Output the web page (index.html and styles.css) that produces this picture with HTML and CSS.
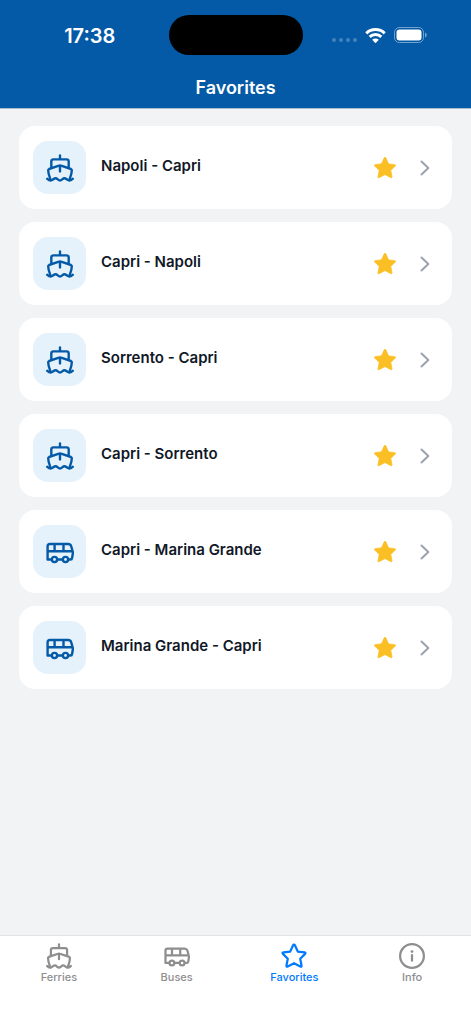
FILE: index.html
```html
<!DOCTYPE html>
<html lang="en">
<head>
<meta charset="utf-8">
<meta name="viewport" content="width=device-width, initial-scale=1">
<title>Favorites</title>
<link rel="stylesheet" href="styles.css">
</head>
<body>
<svg class="sprite" aria-hidden="true">
  <symbol id="ferry" viewBox="0 0 28 28">
    <path d="M14 1.400v4M5.300 13.500V7.600q0-2.200 2.200-2.200h13q2.200 0 2.200 2.200v5.900M14 12v5.400M4.300 25C3 21.800 2.200 19 2.200 16.200q0-.9.800-1.200L13 11.600q1-.4 2 0l10 3.400q.8.300.8 1.200c0 2.800-.8 5.600-2.100 8.800M1.200 24.800c1.300 1.500 3.300 2 4.900 1.200 1.200-.6 2.100-1.800 3.500-1.800 1.700 0 2.700 2.300 4.400 2.300s2.700-2.300 4.400-2.300c1.400 0 2.300 1.200 3.500 1.800 1.600.8 3.600.3 4.900-1.200"/>
  </symbol>
  <symbol id="bus" viewBox="0 0 28 28">
    <path d="M5.600 21.500H1.600V8.300q0-2.300 2.300-2.300h18.200q2.300 0 3 2l1.500 5.200q.4 1.200.2 2.500l-.7 4.300q-.2 1.500-1.700 1.500h-1.800M11.400 21.500h5.200M1.600 13.300h24.800M8.600 6v7.300M17.500 6v7.300"/>
    <circle cx="8.500" cy="21.500" r="2.600"/><circle cx="19.500" cy="21.500" r="2.600"/>
  </symbol>
  <symbol id="star" viewBox="0 0 28 28">
    <path d="M14 1.800q.7 0 1.100.9l3 6.500 7.300.9q1.700.3.500 1.600l-5.200 5.200 1.400 7.400q.2 1.700-1.300.9L14 21.700l-6.800 3.500q-1.500.8-1.300-.9l1.400-7.400-5.200-5.200q-1.200-1.300.5-1.600l7.300-.9 3-6.500q.4-.9 1.100-.9z"/>
  </symbol>
  <symbol id="chevron" viewBox="0 0 10 18"><path d="m1.500 2.500 6.800 6.500-6.800 6.500"/></symbol>
</svg>
<div class="app">
  <header class="header">
    <div class="status">
      <span class="time">17:38</span>
      <span class="island"></span>
      <span class="signals">
        <span class="dots"><i></i><i></i><i></i><i></i></span>
        <svg class="wifi" viewBox="0 0 21 15" aria-hidden="true"><path d="M1.300 5.300a13.200 13.200 0 0 1 18.400 0M4.700 8.800a8.400 8.400 0 0 1 11.600 0"/><path class="wifi-tip" d="M7.200 11.800a4.700 4.700 0 0 1 6.600 0l-2.800 2.900q-.5.4-1 0z"/></svg>
        <svg class="battery" viewBox="0 0 33 16" aria-hidden="true"><rect class="battery-shell" x=".5" y=".5" width="29" height="15" rx="4.800"/><rect x="2.500" y="2.500" width="25" height="11" rx="3"/><path class="battery-cap" d="M31 5.500q1.800.8 1.800 2.500T31 10.500z"/></svg>
      </span>
    </div>
    <h1 class="title">Favorites</h1>
  </header>
  <main class="list">
    <article class="card"><a class="route" href="#"><span class="tile"><svg class="icon"><use href="#ferry"/></svg></span><span class="name">Napoli - Capri</span></a><button class="fav" aria-label="Remove Napoli - Capri"><svg class="gold"><use href="#star"/></svg></button><svg class="chevron"><use href="#chevron"/></svg></article>
    <article class="card"><a class="route" href="#"><span class="tile"><svg class="icon"><use href="#ferry"/></svg></span><span class="name">Capri - Napoli</span></a><button class="fav" aria-label="Remove Capri - Napoli"><svg class="gold"><use href="#star"/></svg></button><svg class="chevron"><use href="#chevron"/></svg></article>
    <article class="card"><a class="route" href="#"><span class="tile"><svg class="icon"><use href="#ferry"/></svg></span><span class="name">Sorrento - Capri</span></a><button class="fav" aria-label="Remove Sorrento - Capri"><svg class="gold"><use href="#star"/></svg></button><svg class="chevron"><use href="#chevron"/></svg></article>
    <article class="card"><a class="route" href="#"><span class="tile"><svg class="icon"><use href="#ferry"/></svg></span><span class="name">Capri - Sorrento</span></a><button class="fav" aria-label="Remove Capri - Sorrento"><svg class="gold"><use href="#star"/></svg></button><svg class="chevron"><use href="#chevron"/></svg></article>
    <article class="card"><a class="route" href="#"><span class="tile"><svg class="icon"><use href="#bus"/></svg></span><span class="name">Capri - Marina Grande</span></a><button class="fav" aria-label="Remove Capri - Marina Grande"><svg class="gold"><use href="#star"/></svg></button><svg class="chevron"><use href="#chevron"/></svg></article>
    <article class="card"><a class="route" href="#"><span class="tile"><svg class="icon"><use href="#bus"/></svg></span><span class="name">Marina Grande - Capri</span></a><button class="fav" aria-label="Remove Marina Grande - Capri"><svg class="gold"><use href="#star"/></svg></button><svg class="chevron"><use href="#chevron"/></svg></article>
  </main>
  <nav class="tabs">
    <a class="tab" href="#"><svg class="tab-icon"><use href="#ferry"/></svg>Ferries</a>
    <a class="tab" href="#"><svg class="tab-icon"><use href="#bus"/></svg>Buses</a>
    <a class="tab active" href="#" aria-current="page"><svg class="tab-icon"><use href="#star"/></svg>Favorites</a>
    <a class="tab" href="#"><svg class="tab-icon" viewBox="0 0 28 28"><circle cx="14" cy="14" r="12.800"/><path d="M14 13v6"/><circle class="info-dot" cx="14" cy="9.200" r="1.500"/></svg>Info</a>
  </nav>
</div>
</body>
</html>
```

FILE: styles.css
```css
* { box-sizing: border-box; }
body { margin: 0; font-family: Inter, "Liberation Sans", sans-serif; background: #f2f3f5; color: #111827; }
svg { display: block; fill: none; stroke: currentColor; stroke-width: 2; stroke-linecap: round; stroke-linejoin: round; }
a { color: inherit; text-decoration: none; }
.sprite { position: absolute; width: 0; height: 0; }
.app { min-height: 100vh; display: flex; flex-direction: column; }
.header { background: #045aa6; color: #fff; border-bottom: 1px solid #a9bdd1; padding: 15px 0 8px; }
.status { display: grid; grid-template-columns: 1fr 134px 1fr; align-items: center; }
.time { justify-self: center; font-size: 20px; line-height: 24px; font-weight: 600; padding: 1px 0 0 11px; }
.island { height: 40px; border-radius: 20px; background: #000; }
.signals { display: flex; align-items: center; justify-self: end; gap: 8px; padding-right: 44px; }
.dots { display: flex; gap: 3px; padding-top: 10px; }
.dots i { width: 4px; height: 4px; border-radius: 2px; background: #4383bc; }
.wifi { width: 21px; height: 15px; stroke-width: 3; stroke-linecap: butt; }
.wifi-tip { fill: #fff; stroke: none; }
.battery { width: 33px; height: 16px; fill: #fff; stroke: none; }
.battery-shell { fill: none; stroke: #73a3cd; stroke-width: 1; }
.battery-cap { fill: #73a3cd; }
.title { margin: 21px 0 0; text-align: center; font-size: 18px; line-height: 24px; font-weight: 600; }
.list { flex: 1; display: flex; flex-direction: column; gap: 13px; padding: 17px 19px; }
.card { display: flex; align-items: center; background: #fff; border-radius: 16px; padding: 15px 22px 15px 14px; }
.route { flex: 1; display: flex; align-items: center; gap: 15px; }
.tile { display: grid; place-items: center; width: 53px; height: 53px; border-radius: 15px; background: #e5f1fb; color: #045aa6; }
.icon { width: 28px; height: 28px; stroke-width: 2.4; }
.name { font-size: 15px; line-height: 20px; font-weight: 600; padding-bottom: 3px; }
.fav { border: 0; padding: 0; background: none; color: #fbbf24; margin-right: 23px; }
.gold { width: 24px; height: 24px; fill: currentColor; stroke-width: 1; }
.chevron { width: 10px; height: 18px; color: #9ca3af; }
.tabs { display: grid; grid-template-columns: repeat(4, 1fr); background: #fff; border-top: 1px solid #e3e4e6; padding: 7px 0 40px; }
.tab { display: flex; flex-direction: column; align-items: center; gap: 1px; color: #8e8e8f; font-size: 11px; line-height: 14px; font-weight: 500; }
.tab.active { color: #007aff; }
.tab-icon { width: 26px; height: 26px; stroke-width: 2.4; }
.info-dot { fill: currentColor; stroke: none; }
```
